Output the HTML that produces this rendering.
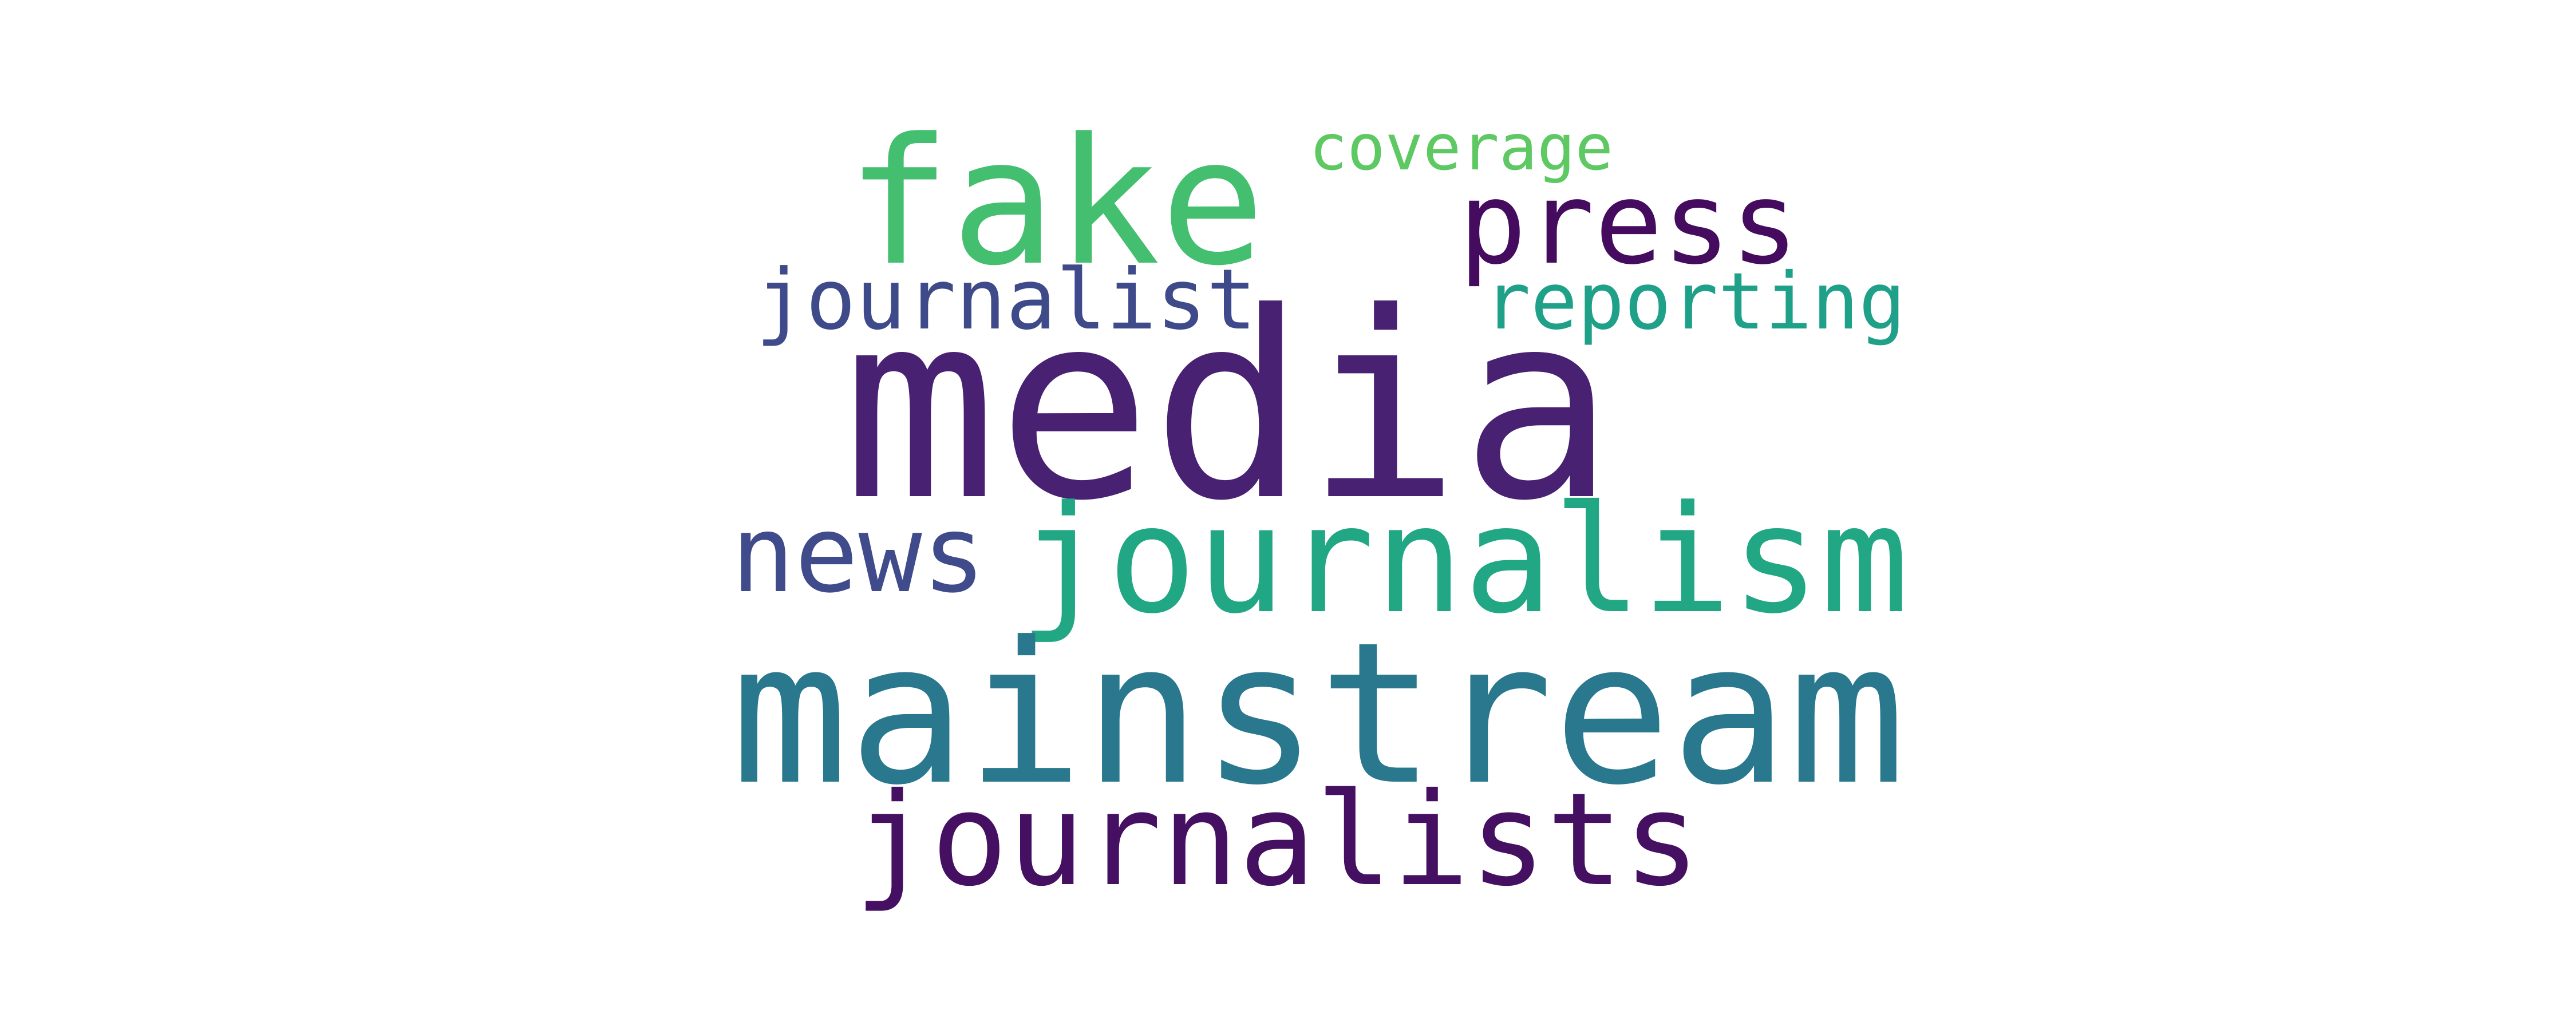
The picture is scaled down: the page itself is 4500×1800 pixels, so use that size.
<!DOCTYPE html>
<html><head><style>html,body{margin:0;padding:0;background:#fff;}svg{display:block}</style></head>
<body>
<svg width="4500" height="1800" xmlns="http://www.w3.org/2000/svg" font-family="'DejaVu Sans Mono', 'Liberation Mono', monospace">
<rect width="4500" height="1800" fill="#fff"/>
<text x="2287" y="296" font-size="111" fill="#5ec962" textLength="531" lengthAdjust="spacingAndGlyphs">coverage</text>
<text x="1478" y="459" font-size="305" fill="#44bf70" textLength="732" lengthAdjust="spacingAndGlyphs">fake</text>
<text x="2548" y="459" font-size="198" fill="#440b5e" textLength="594" lengthAdjust="spacingAndGlyphs">press</text>
<text x="1320" y="574" font-size="146" fill="#3e4a89" textLength="875" lengthAdjust="spacingAndGlyphs">journalist</text>
<text x="2592" y="574" font-size="137" fill="#1fa088" textLength="737" lengthAdjust="spacingAndGlyphs">reporting</text>
<text x="1472" y="867" font-size="450" fill="#482173" textLength="1349" lengthAdjust="spacingAndGlyphs">media</text>
<text x="1277" y="1033" font-size="186" fill="#3f4b8a" textLength="445" lengthAdjust="spacingAndGlyphs">news</text>
<text x="1779" y="1068" font-size="259" fill="#22a785" textLength="1556" lengthAdjust="spacingAndGlyphs">journalism</text>
<text x="1277" y="1366" font-size="342" fill="#29788e" textLength="2052" lengthAdjust="spacingAndGlyphs">mainstream</text>
<text x="1492" y="1545" font-size="224" fill="#450f62" textLength="1478" lengthAdjust="spacingAndGlyphs">journalists</text>
</svg>
</body></html>
